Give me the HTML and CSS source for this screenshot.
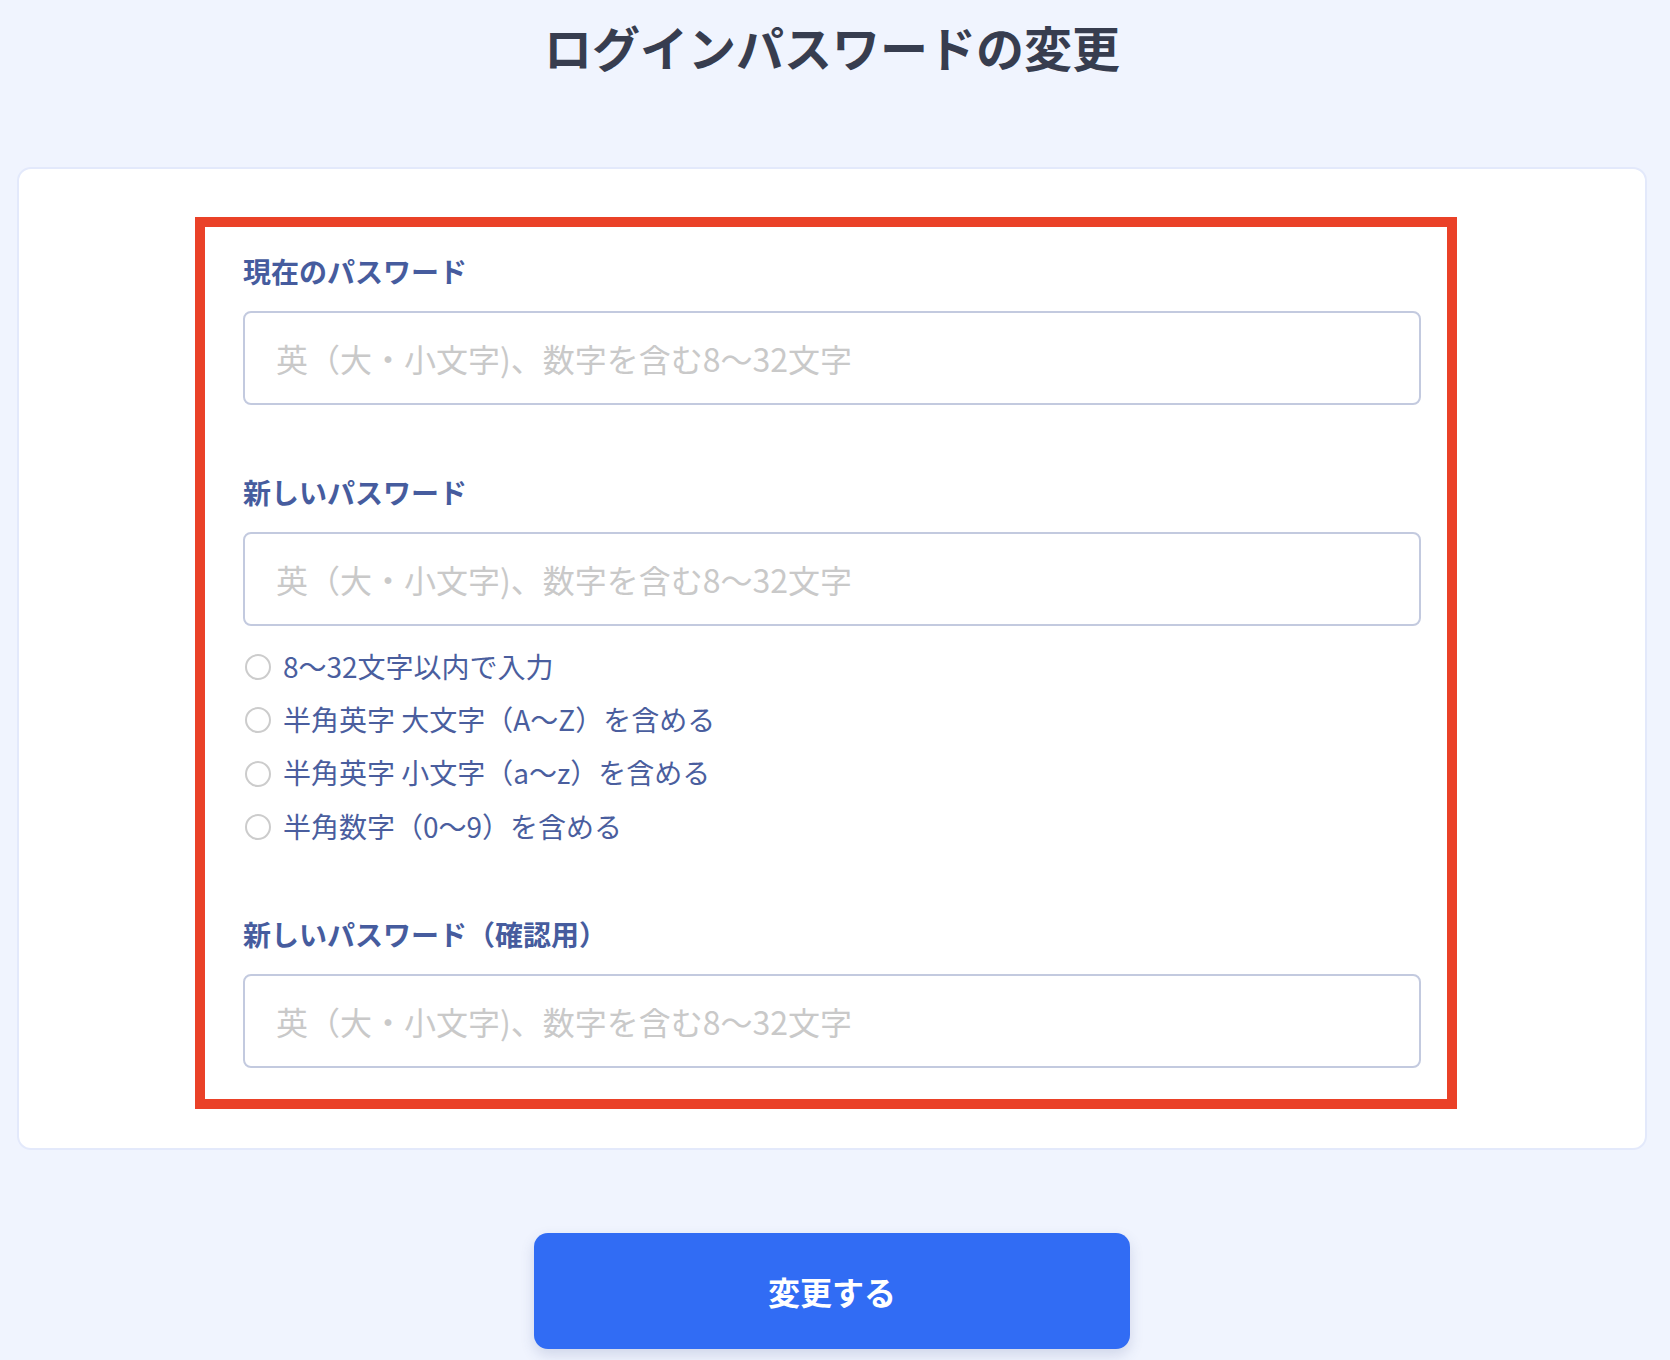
FILE: index.html
```html
<!DOCTYPE html>
<html lang="ja">
<head>
<meta charset="utf-8">
<title>ログインパスワードの変更</title>
<link rel="stylesheet" href="styles.css">
</head>
<body>
<div class="page">
  <h1 class="title">ログインパスワードの変更</h1>
  <div class="card">
    <form class="form">
      <div class="field">
        <label class="label">現在のパスワード</label>
        <input class="input" type="password" placeholder="英（大・小文字)、数字を含む8〜32文字">
      </div>
      <div class="field field-gap">
        <label class="label">新しいパスワード</label>
        <input class="input" type="password" placeholder="英（大・小文字)、数字を含む8〜32文字">
        <ul class="rules">
          <li class="rule"><span class="dot"></span><span>8〜32文字以内で入力</span></li>
          <li class="rule"><span class="dot"></span><span>半角英字 大文字（A〜Z）を含める</span></li>
          <li class="rule"><span class="dot"></span><span>半角英字 小文字（a〜z）を含める</span></li>
          <li class="rule"><span class="dot"></span><span>半角数字（0〜9）を含める</span></li>
        </ul>
      </div>
      <div class="field field-gap2">
        <label class="label">新しいパスワード（確認用）</label>
        <input class="input" type="password" placeholder="英（大・小文字)、数字を含む8〜32文字">
      </div>
    </form>
  </div>
  <div class="actions">
    <button class="btn" type="button">変更する</button>
  </div>
</div>
</body>
</html>
```
FILE: styles.css
```css
html, body {
  margin: 0;
  padding: 0;
  background: #f0f4fe;
}
body {
  font-family: "Noto Sans CJK JP", "Noto Sans", sans-serif;
}
.page {
  width: 1664px;
  padding-bottom: 20px;
}
.title {
  margin: 10px 0 0;
  height: 72px;
  line-height: 72px;
  font-size: 48px;
  font-weight: 700;
  color: #373d4f;
  text-align: center;
}
.card {
  margin: 85px 17px 0;
  background: #ffffff;
  border: 2px solid #e3e9fb;
  border-radius: 14px;
  padding: 48px 188px 39px 176px;
}
.form {
  border: 10px solid #ea4128;
  padding: 23px 26px 31px 38px;
  display: flex;
  flex-direction: column;
}
.field {
  display: flex;
  flex-direction: column;
}
.field-gap {
  margin-top: 66px;
}
.field-gap2 {
  margin-top: 61px;
}
.label {
  font-size: 28px;
  line-height: 42px;
  font-weight: 700;
  color: #465c9e;
  margin-bottom: 19px;
}
.input {
  box-sizing: border-box;
  height: 94px;
  width: 100%;
  border: 2px solid #c3cadf;
  border-radius: 8px;
  padding: 0 31px;
  font-family: "Noto Sans CJK JP", "Noto Sans", sans-serif;
  font-size: 32px;
  color: #333;
  background: #fff;
  outline: none;
}
.input::placeholder {
  color: #c9c9c9;
}
.rules {
  list-style: none;
  margin: 13px 0 0;
  padding: 0;
}
.rule {
  display: flex;
  align-items: center;
  height: 53.3px;
  font-size: 28px;
  line-height: 42px;
  color: #4a5e9e;
}
.dot {
  box-sizing: border-box;
  width: 26px;
  height: 26px;
  border: 2px solid #cccccc;
  border-radius: 50%;
  margin: 3px 12px 0 2px;
  flex: none;
}
.actions {
  display: flex;
  justify-content: center;
  margin-top: 83px;
}
.btn {
  width: 596px;
  height: 116px;
  border: none;
  border-radius: 14px;
  background: #316cf4;
  color: #ffffff;
  font-family: "Noto Sans CJK JP", "Noto Sans", sans-serif;
  font-size: 32px;
  font-weight: 700;
  box-shadow: 0 6px 14px rgba(60, 80, 140, 0.18);
  cursor: pointer;
}
```
